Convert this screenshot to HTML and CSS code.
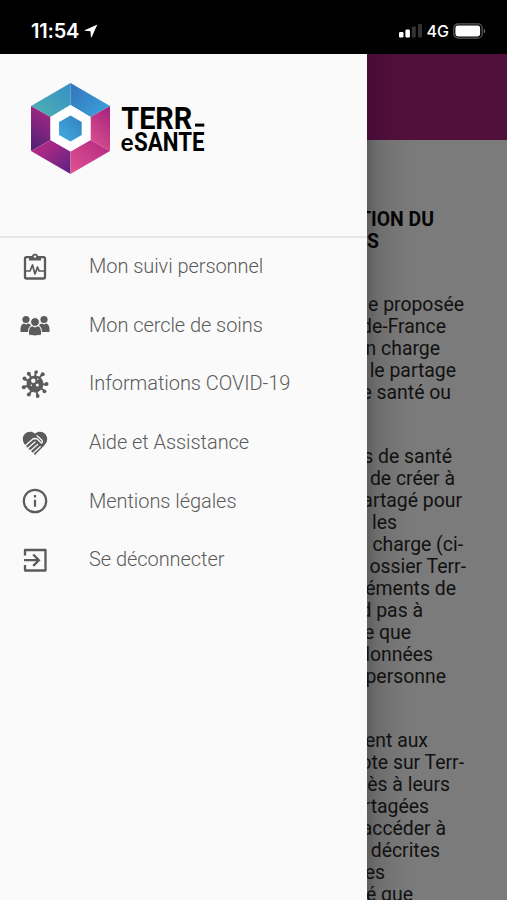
FILE: index.html
```html
<!DOCTYPE html>
<html lang="fr">
<head>
<meta charset="utf-8">
<title>Terr-eSanté</title>
<link rel="stylesheet" href="styles.css">
</head>
<body>
<div class="phone">
  <header class="status">
    <span class="time">11:54</span>
    <svg class="arrow" viewBox="0 0 14 14"><path d="M13.4.5.6 6.2q-.5.4.2.6l5.7.4.4 5.9q.2.7.7.1Z"/></svg>
    <svg class="signal" viewBox="0 0 24 16"><rect x="0" y="9" width="4.5" height="5.5" rx="1.3"/><rect x="6.4" y="6.6" width="4.5" height="7.9" rx="1.3"/><rect class="dim" x="12.8" y="3.5" width="4" height="11" rx="1"/><rect class="dim" x="19" y="1" width="4" height="13.5" rx="1"/></svg>
    <span class="network">4G</span>
    <svg class="battery" viewBox="0 0 33 16"><rect class="shell" x=".8" y=".8" width="28.4" height="14.4" rx="4.3"/><rect x="2.4" y="2.5" width="24.7" height="11" rx="2.4"/><path class="tip" d="M30.8 5.5q3.2 2.5 0 5Z"/></svg>
  </header>
  <div class="screen">
    <aside class="drawer">
      <div class="brand">
        <svg class="logo" viewBox="20 75 200 110">
          <defs>
            <linearGradient id="a" x1="0" y1="1" x2="1" y2="0"><stop offset="0" stop-color="#51b3ac"/><stop offset="1" stop-color="#348fc9"/></linearGradient>
            <linearGradient id="b" x1="0" y1="0" x2="1" y2="1"><stop offset="0" stop-color="#3272b8"/><stop offset="1" stop-color="#3ea5df"/></linearGradient>
            <linearGradient id="c" x1=".6" y1="0" x2=".3" y2="1"><stop offset="0" stop-color="#a72884"/><stop offset="1" stop-color="#512177"/></linearGradient>
            <linearGradient id="d" x1="0" y1="0" x2="1" y2="1"><stop offset="0" stop-color="#b52b83"/><stop offset=".35" stop-color="#a52886"/><stop offset="1" stop-color="#592280"/></linearGradient>
            <linearGradient id="e" x1="1" y1="0" x2="0" y2="1"><stop offset="0" stop-color="#b12681"/><stop offset="1" stop-color="#e25491"/></linearGradient>
            <linearGradient id="f" x1=".8" y1="0" x2=".3" y2="1"><stop offset="0" stop-color="#a7247f"/><stop offset="1" stop-color="#dc5190"/></linearGradient>
            <linearGradient id="g" x1="0" y1="1" x2="1" y2="0"><stop offset="0" stop-color="#43ade0"/><stop offset="1" stop-color="#337fc0"/></linearGradient>
          </defs>
          <path fill="url(#a)" d="M70.5 83 31 106l19.5 11 20-12Z"/>
          <path fill="url(#b)" d="M70.5 83 110 106l-19.5 11-20-12Z"/>
          <path fill="url(#c)" d="M31 106v45l19.5-11v-23Z"/>
          <path fill="url(#f)" d="M110 106v45l-19.5-11v-23Z"/>
          <path fill="url(#d)" d="M31 151l39.5 23v-22.500l-20-11.500Z"/>
          <path fill="url(#e)" d="M110 151l-39.500 23v-22.500l20-11.500Z"/>
          <path fill="#fff" d="m70.500 105 20 12v23l-20 11.500-20-11.500v-23Z"/>
          <path fill="url(#g)" d="m70.500 115.500 11.200 6.400v13.200l-11.200 6.500-11.500-6.500v-13.200Z"/>
          <text class="word" x="121.300" y="129" font-size="32" textLength="71" lengthAdjust="spacingAndGlyphs">TERR</text>
          <rect x="195" y="123.600" width="9.300" height="3"/>
          <text class="word light" x="120.500" y="151" font-size="24" textLength="13" lengthAdjust="spacingAndGlyphs">e</text>
          <text class="word" x="134" y="151" font-size="25.500" textLength="70.500" lengthAdjust="spacingAndGlyphs">SANTE</text>
        </svg>
      </div>
      <nav class="menu">
        <a class="item"><svg class="icon" viewBox="0 0 30 30"><g fill="none" stroke="currentColor" stroke-width="2.300" stroke-linejoin="round"><rect x="5" y="5.200" width="20" height="21.300" rx="1.500"/><path stroke-width="1.700" d="M5 19h5l2.500-6 2.500 9 2.500-7 1.600 4H25"/></g><path fill="currentColor" d="M9 4h3q.5-2.500 3-2.500T18 4h3v4.500H9Z"/><circle cx="15" cy="4.600" r="1.200" fill="#fafafa"/></svg><span>Mon suivi personnel</span></a>
        <a class="item"><svg class="icon" viewBox="0 0 30 30"><g fill="currentColor"><circle cx="6" cy="9.500" r="3.600"/><circle cx="24" cy="9.500" r="3.600"/><path d="M.5 22v-3.500Q1 13.800 4 13.500l2 1 2-1q2 .2 3 1.700-2.500 1.400-2.600 6.800ZM29.500 22v-3.500q-.5-4.700-3.500-5l-2 1-2-1q-2 .2-3 1.700 2.500 1.400 2.600 6.800Z"/><path stroke="#fafafa" stroke-width="1" d="M8.500 25v-3.500q.4-5.400 4-5.700l2.500 1.200 2.500-1.200q3.600.3 4 5.700V25q-6.500 2-13 0Z"/><circle cx="15" cy="12" r="4.400" stroke="#fafafa"/></g></svg><span>Mon cercle de soins</span></a>
        <a class="item"><svg class="icon" viewBox="0 0 30 30"><g fill="currentColor" stroke="currentColor"><circle cx="15" cy="15" r="8"/><path stroke-width="2" d="M15 15 15.500 3M15 15l7-9.500M15 15l11.500.5M15 15l9 6.500M15 15l2.500 12M15 15 9.500 25M15 15 3.500 18M15 15 4.500 10M15 15 9 5"/></g><g fill="currentColor"><circle cx="16.200" cy="3" r="1.800"/><circle cx="22.700" cy="5.200" r="2"/><circle cx="26.500" cy="15" r="2"/><circle cx="24.500" cy="22.300" r="1.900"/><circle cx="17.700" cy="27" r="1.900"/><circle cx="8.800" cy="25.500" r="2"/><circle cx="3.800" cy="18.300" r="2"/><circle cx="4.500" cy="9.500" r="2"/><circle cx="8.800" cy="4.800" r="2"/></g><g fill="#fafafa"><circle cx="13.300" cy="11.800" r="2.200"/><circle cx="17.300" cy="16" r="1.500"/><circle cx="17.800" cy="10.300" r=".8"/><circle cx="11.300" cy="16.300" r=".8"/></g></svg><span>Informations COVID-19</span></a>
        <a class="item"><svg class="icon" viewBox="0 0 30 30"><path fill="currentColor" d="M15 5.700C20 1.500 27.300 4.800 27.200 11.300q0 3.200-2.500 5.700L15 27 5 17Q2.800 14.700 2.800 11.300C2.700 4.800 10 1.500 15 5.700Z"/><path fill="none" stroke="#fafafa" stroke-width="1.300" stroke-linecap="round" stroke-linejoin="round" d="M5.500 17.500l8-7 3.500.3 4.500 4.400q1.800-1.300.2-3.200L17 7.700M8 20l7-6M10.500 22.700l7-6.200M13.200 25.200l7-6.400"/></svg><span>Aide et Assistance</span></a>
        <a class="item"><svg class="icon" viewBox="0 0 30 30"><g fill="none" stroke="currentColor" stroke-width="2.200"><circle cx="15" cy="15" r="11.200"/><path d="M15 13.700v7M15 9v2.500"/></g></svg><span>Mentions légales</span></a>
        <a class="item"><svg class="icon" viewBox="0 0 30 30"><path fill="none" stroke="currentColor" stroke-width="2.300" stroke-linejoin="round" d="M5 10.500V5h20.500v20.500H5V20"/><path fill="none" stroke="currentColor" stroke-width="2.300" d="M4 15.200h13.500M13.200 9.500l5.700 5.700-5.700 5.700"/></svg><span>Se déconnecter</span></a>
      </nav>
    </aside>
    <main class="page">
      <div class="toolbar"></div>
      <article class="content">
        <h1 class="title"><span>TION DU</span><span>S</span></h1>
        <p class="intro"><span>e proposée</span><span>de-France</span><span>n charge</span><span>le partage</span><span>e santé ou</span></p>
        <p class="purpose"><span>s de santé</span><span>de créer à</span><span>artagé pour</span><span>les</span><span>charge (ci-</span><span>ossier Terr-</span><span>éments de</span><span>d pas à</span><span>e que</span><span>données</span><span>personne</span></p>
        <p class="access"><span>ent aux</span><span>ote sur Terr-</span><span>ès à leurs</span><span>rtagées</span><span>accéder à</span><span>décrites</span><span>es</span><span>é que</span></p>
      </article>
    </main>
  </div>
</div>
</body>
</html>
```
FILE: styles.css
```css
* { box-sizing: border-box; }
body { margin: 0; font-family: Roboto, sans-serif; }
.phone { width: 507px; height: 900px; overflow: hidden; display: flex; flex-direction: column; background: #000; }
.status { height: 54px; flex: none; display: flex; align-items: center; padding: 8px 21px 0 31px; color: #fff; font-family: Inter, sans-serif; }
.status svg { fill: #fff; flex: none; }
.time { font-size: 20px; font-weight: 600; width: 50px; letter-spacing: -0.2px; white-space: nowrap; }
.arrow { width: 14px; height: 14px; margin-left: 3px; }
.signal { width: 24px; height: 16px; margin-left: auto; }
.signal .dim { fill: #333; }
.network { font-size: 16px; font-weight: 500; margin: 0 4px 0 4px; }
.battery { width: 33px; height: 16px; }
.battery .shell { fill: none; stroke: #5c5c5c; stroke-width: 1.2; }
.battery .tip { fill: #666; }
.screen { flex: 1; display: flex; min-height: 0; }
.drawer { width: 367px; flex: none; background: #fafafa; }
.brand { height: 184px; border-bottom: 2px solid #e6e6e6; padding: 21px 0 0 20px; }
.logo { display: block; width: 200px; height: 110px; }
.word { font-family: Roboto, sans-serif; font-weight: 700; }
.word.light { font-weight: 500; }
.menu { display: flex; flex-direction: column; margin-top: -0.5px; }
.item { height: 58.6px; display: flex; align-items: center; padding-left: 20px; color: #5b5b5b; font-size: 20px; font-weight: 300; letter-spacing: -0.06px; white-space: nowrap; }
.item span { padding-bottom: 1px; }
.icon { width: 30px; height: 30px; margin-right: 39px; flex: none; }
.page { width: 140px; flex: none; overflow: hidden; background: linear-gradient(90deg, #5e5e5e 0, #6d6d6d 10px, #767676 28px, #7b7b7b 50px); }
.toolbar { height: 86px; background: linear-gradient(90deg, #460b36, #510f3c 30px); }
.content { color: #111; font-size: 19.4px; line-height: 22px; padding: 69px 1px 0 0; white-space: nowrap; }
.content span { display: flex; justify-content: flex-end; }
.title { margin: 0; font-size: 19.4px; font-weight: 700; color: #050505; }
.content p { margin: 0; }
.intro { padding-top: 41px; }
.purpose { padding-top: 42px; }
.access { padding-top: 42px; }
.title span:nth-child(1) { margin-right: 72px; }
.title span:nth-child(2) { margin-right: 127px; }
.intro span:nth-child(1) { margin-right: 42px; }
.intro span:nth-child(2) { margin-right: 60px; }
.intro span:nth-child(3) { margin-right: 66px; }
.intro span:nth-child(4) { margin-right: 50px; }
.intro span:nth-child(5) { margin-right: 55px; }
.purpose span:nth-child(1) { margin-right: 54px; }
.purpose span:nth-child(2) { margin-right: 51px; }
.purpose span:nth-child(3) { margin-right: 44px; }
.purpose span:nth-child(4) { margin-right: 109px; }
.purpose span:nth-child(5) { margin-right: 43px; }
.purpose span:nth-child(6) { margin-right: 40px; }
.purpose span:nth-child(7) { margin-right: 50px; }
.purpose span:nth-child(8) { margin-right: 83px; }
.purpose span:nth-child(9) { margin-right: 95px; }
.purpose span:nth-child(10) { margin-right: 73px; }
.purpose span:nth-child(11) { margin-right: 60px; }
.access span:nth-child(1) { margin-right: 78px; }
.access span:nth-child(2) { margin-right: 42px; }
.access span:nth-child(3) { margin-right: 56px; }
.access span:nth-child(4) { margin-right: 77px; }
.access span:nth-child(5) { margin-right: 60px; }
.access span:nth-child(6) { margin-right: 66px; }
.access span:nth-child(7) { margin-right: 121px; }
.access span:nth-child(8) { margin-right: 93px; }
```
